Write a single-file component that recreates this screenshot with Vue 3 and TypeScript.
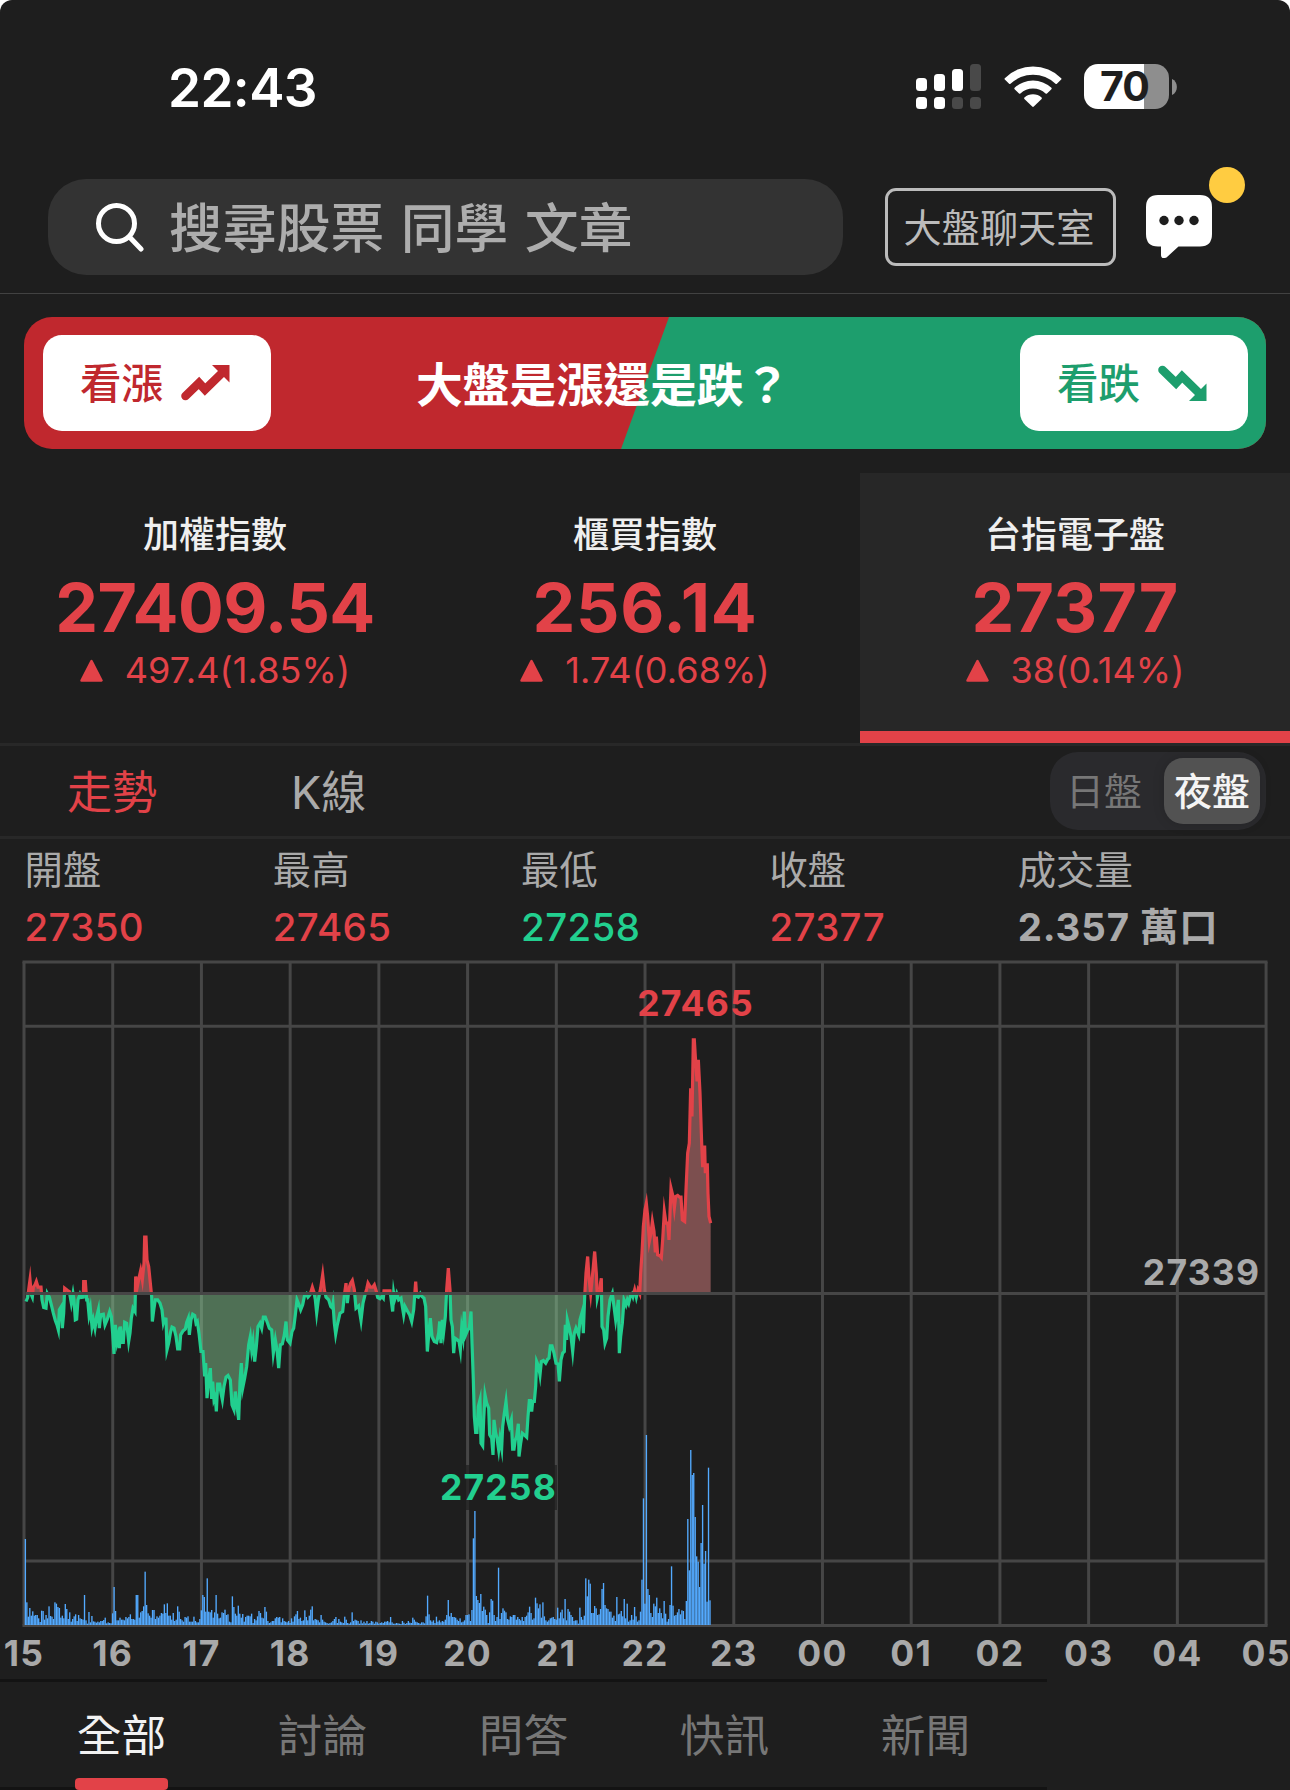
<script setup lang="ts">
interface IndexQuote {
  name: string
  value: string
  change: string
  tracking: number
  active?: boolean
}
interface Stat {
  label: string
  value: string
  tone: 'up' | 'down' | 'flat'
}
type Point = [number, number]

const indices: IndexQuote[] = [
  { name: '加權指數', value: '27409.54', change: '497.4(1.85%)', tracking: -0.6 },
  { name: '櫃買指數', value: '256.14', change: '1.74(0.68%)', tracking: 0.8 },
  { name: '台指電子盤', value: '27377', change: '38(0.14%)', tracking: 0.3, active: true },
]

const stats: Stat[] = [
  { label: '開盤', value: '27350', tone: 'up' },
  { label: '最高', value: '27465', tone: 'up' },
  { label: '最低', value: '27258', tone: 'down' },
  { label: '收盤', value: '27377', tone: 'up' },
  { label: '成交量', value: '2.357 萬口', tone: 'flat' },
]

const feeds = ['全部', '討論', '問答', '快訊', '新聞']

// Chart geometry, in px of the chart's own box
const left = 24
const hourWidth = 88.72
const top = 11
const bottom = 674.5
const baseline = 342.5
const hours = ['15', '16', '17', '18', '19', '20', '21', '22', '23', '00', '01', '02', '03', '04', '05']
const hourX = (i: number): number => left + i * hourWidth
const rows = [75.3, 610]

// Price line: x and y in device thirds, y is 281 at the reference price
const series: string = `
78,305 83,293 86,270 90,240 94,285 97,292 100,262 105,255 109,245 114,262 123,262 126,300 131,323 138,325 142,281 148,292 154,315
160,340 166,362 171,375 175,390 178,330 184,320 187,385 191,340 194,265 203,272 208,275 214,310 219,281 222,300 226,360 230,358
234,300 240,283 244,293 250,292 251,245 256,245 260,300 263,300 267,345 271,325 276,380 280,360 285,385 290,350 295,330 298,385
302,345 310,343 315,375 322,358 329,335 334,350 338,400 342,462 346,375 351,425 354,410 358,445 361,380 366,428 370,428 374,367
380,370 386,425 390,400 394,355 399,325 405,335 407,230 412,260 417,235 422,212 427,240 432,190 434,112 438,112 441,180 446,200
451,250 455,290 457,365 462,325 466,300 473,300 480,310 486,330 490,368 493,357 498,358 501,450 506,430 511,400 516,382 522,385
528,410 533,447 539,447 542,405 549,393 556,388 560,368 565,355 568,405 573,360 578,343 584,347 588,370 592,365 597,400 603,455
609,455 614,530 617,490 621,595 626,540 631,505 635,597 638,545 642,600 646,590 649,635 653,553 659,553 663,580 667,600 672,560
678,532 684,527 691,540 696,615 702,630 706,575 711,620 716,660 720,545 724,490 728,565 734,535 740,500 746,435 751,410 755,450
759,425 764,485 769,440 774,380 780,370 785,385 790,352 796,352 802,368 808,385 815,390 820,460 826,420 831,450 836,505 841,435
847,432 853,405 858,365 862,420 870,430 876,395 881,385 886,345 891,300 897,315 902,330 908,315 914,285 919,281 924,292 930,285
937,262 942,278 946,300 950,340 955,300 962,265 968,225 973,270 978,292 986,300 992,320 997,325 999,312 1003,370 1007,403
1012,375 1020,340 1028,335 1034,280 1038,250 1042,310 1047,265 1052,250 1057,242 1063,270 1068,325 1076,318 1083,362 1089,310
1095,285 1100,268 1104,250 1111,262 1118,262 1123,255 1129,275 1133,293 1140,297 1146,290 1150,295 1152,273 1170,273 1173,295
1178,335 1181,281 1184,300 1190,281 1196,300 1203,295 1211,345 1215,320 1223,335 1229,345 1235,365 1241,330 1247,245 1250,290
1255,292 1261,281 1266,290 1272,295 1277,320 1282,455 1287,395 1291,355 1296,410 1303,425 1310,428 1316,400 1319,365 1323,430
1327,360 1331,395 1336,350 1340,270 1345,205 1350,270 1353,360 1357,380 1361,460 1365,415 1372,420 1377,425 1381,450 1385,385
1389,410 1393,335 1397,405 1403,390 1408,385 1413,335 1416,430 1420,540 1423,650 1427,698 1431,698 1435,620 1440,600 1443,730
1448,738 1451,660 1455,585 1460,610 1466,625 1469,705 1475,715 1479,765 1482,660 1487,700 1491,715 1496,750 1500,715 1505,745
1508,680 1513,640 1518,605 1523,660 1528,680 1534,660 1538,748 1542,748 1546,720 1550,710 1555,672 1557,770 1562,730 1567,700
1573,705 1580,712 1584,650 1588,602 1592,602 1595,635 1598,605 1603,605 1607,560 1610,485 1616,500 1620,525 1624,485 1630,482
1637,490 1643,478 1647,475 1651,438 1656,438 1662,460 1668,490 1674,492 1678,545 1683,480 1688,460 1693,455 1696,375 1700,420
1702,360 1708,385 1713,410 1718,455 1723,400 1728,385 1736,405 1740,360 1747,335 1750,400 1754,290 1758,220 1763,170 1767,235
1772,281 1776,240 1780,200 1784,155 1789,220 1792,295 1798,270 1804,235 1806,380 1811,390 1815,430 1820,415 1824,350 1830,300
1837,281 1842,320 1847,360 1852,325 1855,300 1858,460 1862,410 1867,370 1872,300 1878,315 1882,300 1886,310 1892,285 1896,281
1899,290 1904,270 1909,292 1914,270 1919,281 1922,220 1926,160 1930,80 1935,30 1939,10 1943,50 1948,125 1953,100 1957,65
1962,95 1966,158 1969,110 1973,165 1980,168 1984,173 1988,120 1993,35 1998,70 2003,70 2007,120 2010,40 2013,-35 2019,-10
2023,25 2027,-10 2033,-13 2039,-8 2043,-8 2047,60 2054,65 2058,-30 2063,-140 2068,-170 2072,-335 2076,-250 2080,-480
2083,-480 2086,-430 2091,-355 2095,-420 2100,-320 2105,-170 2108,-98 2110,-158 2114,-158 2116,-80 2118,-105 2122,-105
2124,-20 2127,50 2132,70`

const points: Point[] = series
  .trim()
  .split(/\s+/)
  .map((pair): Point => {
    const [x, y] = pair.split(',').map(Number)
    return [x / 3, (y - 281) / 3 + baseline]
  })

// Split the line into runs that lie above or below the reference price
function splitRuns(all: Point[]): { up: boolean; pts: Point[] }[] {
  const runs: { up: boolean; pts: Point[] }[] = []
  let current = { up: all[0][1] < baseline, pts: [all[0]] }
  for (let i = 1; i < all.length; i++) {
    const a = all[i - 1]
    const b = all[i]
    const up = b[1] === baseline ? current.up : b[1] < baseline
    if (up !== current.up) {
      const t = (baseline - a[1]) / (b[1] - a[1])
      const cross: Point = [a[0] + (b[0] - a[0]) * t, baseline]
      current.pts.push(cross)
      runs.push(current)
      current = { up, pts: [cross] }
    }
    current.pts.push(b)
  }
  runs.push(current)
  return runs
}

const runs = splitRuns(points).map((run) => {
  const line = run.pts.map(([x, y]) => `${x.toFixed(2)},${y.toFixed(2)}`).join(' ')
  const first = run.pts[0][0].toFixed(2)
  const last = run.pts[run.pts.length - 1][0].toFixed(2)
  return { up: run.up, line, area: `${first},${baseline} ${line} ${last},${baseline}` }
})

// One-minute volumes, one row per trading hour
const volumes: number[][] = [
  [258, 68, 25, 51, 28, 41, 28, 30, 30, 20, 9, 43, 42, 16, 30, 20, 56, 27, 25, 18, 68, 64, 54, 51, 22, 28, 20, 63, 48, 18, 38, 10, 18, 26, 32, 12, 30, 20, 18, 16, 90, 14, 4, 39, 8, 27, 11, 10, 7, 10, 8, 12, 12, 15, 22, 5, 8, 6, 5, 35],
  [114, 42, 14, 14, 22, 16, 16, 14, 24, 20, 24, 32, 18, 18, 16, 90, 90, 22, 38, 42, 56, 160, 60, 35, 28, 22, 45, 45, 18, 26, 22, 28, 36, 34, 62, 36, 65, 28, 28, 16, 36, 12, 16, 56, 40, 18, 14, 10, 24, 22, 26, 10, 10, 10, 25, 12, 8, 8, 18, 44],
  [90, 84, 40, 140, 40, 38, 45, 22, 38, 90, 34, 20, 22, 38, 36, 46, 30, 32, 10, 8, 86, 54, 34, 28, 58, 34, 22, 33, 10, 24, 28, 28, 26, 34, 6, 18, 14, 26, 42, 36, 22, 20, 54, 40, 12, 6, 8, 12, 12, 20, 24, 22, 24, 8, 20, 12, 10, 8, 12, 6],
  [20, 10, 26, 32, 42, 18, 22, 12, 14, 44, 24, 14, 28, 46, 56, 14, 18, 16, 14, 8, 30, 16, 10, 8, 6, 4, 6, 8, 12, 18, 24, 6, 18, 10, 8, 6, 25, 16, 6, 4, 8, 38, 12, 16, 14, 12, 4, 14, 5, 10, 5, 12, 4, 6, 12, 10, 4, 10, 8, 4],
  [6, 8, 6, 10, 10, 12, 8, 24, 8, 4, 4, 6, 5, 4, 3, 12, 7, 3, 6, 12, 7, 6, 22, 16, 10, 8, 6, 4, 8, 8, 5, 26, 88, 32, 14, 10, 14, 6, 25, 10, 14, 8, 12, 10, 16, 30, 75, 26, 36, 24, 24, 22, 16, 12, 20, 8, 10, 14, 30, 30],
  [32, 12, 45, 260, 342, 87, 75, 66, 93, 42, 55, 46, 30, 6, 38, 78, 73, 30, 12, 24, 172, 18, 36, 50, 43, 38, 18, 16, 26, 24, 30, 30, 16, 24, 18, 14, 24, 12, 24, 28, 38, 55, 36, 16, 20, 82, 65, 50, 62, 22, 68, 26, 14, 10, 14, 20, 22, 24, 18, 16],
  [52, 20, 38, 46, 20, 78, 14, 48, 40, 30, 24, 12, 14, 14, 4, 52, 24, 16, 28, 140, 86, 136, 124, 36, 36, 57, 50, 30, 32, 48, 108, 126, 60, 50, 48, 40, 40, 22, 28, 12, 84, 32, 34, 42, 26, 78, 20, 64, 10, 14, 30, 16, 54, 26, 10, 14, 40, 136, 380, 64],
  [570, 108, 90, 36, 24, 64, 56, 82, 36, 50, 36, 20, 72, 34, 10, 18, 60, 176, 58, 28, 30, 38, 48, 32, 44, 42, 18, 72, 318, 164, 525, 450, 456, 324, 206, 190, 114, 246, 360, 184, 222, 70, 472, 74],
]

const bars = volumes.flatMap((row, h) =>
  row.map((v, m) => ({ x: 24.7 + (h * 60 + m) * (hourWidth / 60), h: v / 3 })),
)
</script>

<template>
  <div class="screen">
    <div class="status">
      <span class="clock">22:43</span>
      <div class="status-icons">
        <svg class="signal" width="65" height="45" viewBox="0 0 65 45">
          <g fill="#fff">
            <rect x="0" y="14" width="11" height="13" rx="3.5" />
            <rect x="18" y="10" width="11" height="17" rx="3.5" />
            <rect x="36" y="5" width="11" height="22" rx="3.5" />
            <rect x="0" y="33" width="11" height="12" rx="3.5" />
            <rect x="18" y="33" width="11" height="12" rx="3.5" />
          </g>
          <g fill="#494949">
            <rect x="54" y="0" width="11" height="27" rx="3.5" />
            <rect x="36" y="33" width="11" height="12" rx="3.5" />
            <rect x="54" y="33" width="11" height="12" rx="3.5" />
          </g>
        </svg>
        <svg class="wifi" width="58" height="43" viewBox="0 0 58 43">
          <g fill="#fff">
            <path d="M0.8 13.2 A40 40 0 0 1 57.2 13.2 Q57.8 13.9 57.2 14.6 L52.9 18.8 Q52.2 19.4 51.5 18.8 A32.4 32.4 0 0 0 6.5 18.8 Q5.8 19.4 5.1 18.8 L0.8 14.6 Q0.2 13.9 0.8 13.2 Z" />
            <path d="M10.6 22.8 A27 27 0 0 1 47.4 22.8 Q48 23.5 47.4 24.2 L43 28.4 Q42.3 29 41.6 28.4 A19 19 0 0 0 16.4 28.4 Q15.7 29 15 28.4 L10.6 24.2 Q10 23.5 10.6 22.8 Z" />
            <path d="M20.4 32.4 A13 13 0 0 1 37.6 32.4 Q38.3 33.2 37.6 33.9 L29.8 41.6 Q29 42.3 28.2 41.6 L20.4 33.9 Q19.7 33.2 20.4 32.4 Z" />
          </g>
        </svg>
        <div class="battery"><span>70</span></div>
        <svg class="nub" width="5" height="16" viewBox="0 0 5 16"><path d="M0 0 C6.5 2.5 6.5 13.5 0 16 Z" fill="#8e8e8e" /></svg>
      </div>
    </div>

    <header class="header">
      <div class="search">
        <svg width="50" height="50" viewBox="0 0 50 50" fill="none" stroke="#fff" stroke-width="5" stroke-linecap="round">
          <circle cx="21.5" cy="21.5" r="18" />
          <path d="M34.5 35 L46 47" />
        </svg>
        <span>搜尋股票 同學 文章</span>
      </div>
      <button class="room">大盤聊天室</button>
      <div class="messages">
        <svg width="66" height="64" viewBox="0 0 66 64">
          <path d="M12 0 H54 Q66 0 66 12 V39 Q66 51.5 54 51.5 H32.5 L20.5 62.5 Q15 64.5 15 60 V51.5 H12 Q0 51.5 0 39 V12 Q0 0 12 0 Z" fill="#fff" />
          <circle v-for="cx in [18, 33, 48]" :key="cx" :cx="cx" cy="25.5" r="4.7" fill="#1e1e1e" />
        </svg>
        <i class="badge" />
      </div>
    </header>

    <section class="poll">
      <svg class="poll-bg" width="1242" height="132" viewBox="0 0 1242 132">
        <rect width="1242" height="132" fill="#c0282e" />
        <path d="M645 0 H1242 V132 H597 Z" fill="#1d9e6d" />
      </svg>
      <button class="vote vote-up">
        <span>看漲</span>
        <svg width="49" height="36" viewBox="0 0 49 36">
          <path d="M4.5 31 L18 18 L24 24.5 L41 8" fill="none" stroke="currentColor" stroke-width="8.6" stroke-linecap="round" />
          <path d="M31 0 H48.5 V17.5 Z" fill="currentColor" />
        </svg>
      </button>
      <h1>大盤是漲還是跌？</h1>
      <button class="vote vote-down">
        <span>看跌</span>
        <svg width="49" height="36" viewBox="0 0 49 36">
          <path d="M4.5 5 L18 18 L24 11.5 L41 28" fill="none" stroke="currentColor" stroke-width="8.6" stroke-linecap="round" />
          <path d="M31 36 H48.5 V18.5 Z" fill="currentColor" />
        </svg>
      </button>
    </section>

    <section class="indices">
      <div v-for="q in indices" :key="q.name" class="index" :class="{ active: q.active }">
        <div class="index-name">{{ q.name }}</div>
        <div class="index-value" :style="{ letterSpacing: q.tracking + 'px' }">{{ q.value }}</div>
        <div class="index-change">
          <svg width="23" height="23" viewBox="0 0 23 23"><path d="M11.5 2 L21.5 21.5 H1.5 Z" fill="#e24248" stroke="#e24248" stroke-width="2.5" stroke-linejoin="round" /></svg>
          <span>{{ q.change }}</span>
        </div>
      </div>
    </section>

    <section class="modes">
      <span class="mode on">走勢</span>
      <span class="mode">K線</span>
      <div class="segment">
        <span>日盤</span>
        <span class="chosen">夜盤</span>
      </div>
    </section>

    <section class="stats">
      <div v-for="s in stats" :key="s.label" class="stat">
        <div class="stat-label">{{ s.label }}</div>
        <div class="stat-value" :class="s.tone">{{ s.value }}</div>
      </div>
    </section>

    <svg class="chart" width="1290" height="728" viewBox="0 0 1290 728">
      <g stroke="#464646" stroke-width="3">
        <line v-for="(h, i) in hours" :key="h" :x1="hourX(i)" :x2="hourX(i)" :y1="top" :y2="bottom" />
        <line v-for="y in rows" :key="y" :x1="left" :x2="1266" :y1="y" :y2="y" />
        <path :d="`M22.5 ${top} H1267.5 M22.5 ${bottom} H1267.5`" />
      </g>
      <rect x="441" y="514" width="116" height="45" fill="#1e1e1e" fill-opacity=".7" />
      <g fill="#53aaff">
        <rect v-for="(b, i) in bars" :key="i" :x="b.x" :y="bottom - 0.5 - b.h" width="1.35" :height="b.h" />
      </g>
      <polygon v-for="(r, i) in runs" :key="'a' + i" :points="r.area" :class="r.up ? 'area-up' : 'area-down'" />
      <polyline v-for="(r, i) in runs" :key="'l' + i" :points="r.line" :class="r.up ? 'line-up' : 'line-down'" />
      <line :x1="25.5" :x2="1266" :y1="baseline" :y2="baseline" stroke="#464646" stroke-width="3" />
      <g class="chart-label">
        <text x="695.5" y="65.3" text-anchor="middle" fill="#e24248">27465</text>
        <text x="498.5" y="549.3" text-anchor="middle" fill="#22cf8f">27258</text>
        <text x="1201.5" y="334.3" text-anchor="middle">27339</text>
        <text v-for="(h, i) in hours" :key="'t' + h" :x="hourX(i)" y="714.8" text-anchor="middle">{{ h }}</text>
      </g>
    </svg>

    <nav class="feeds">
      <span v-for="(f, i) in feeds" :key="f" class="feed" :class="{ current: i === 0 }">{{ f }}</span>
    </nav>
  </div>
</template>

<style>
body {
  background: #fff;
}
</style>

<style scoped>
.screen {
  display: flex;
  flex-direction: column;
  width: 1290px;
  height: 1790px;
  overflow: hidden;
  background: #1e1e1e;
  border-radius: 12px 12px 0 0;
  color: #aaa;
  font-family: Inter, "Noto Sans CJK TC", sans-serif;
  box-sizing: border-box;
}
.screen *,
.screen *::before,
.screen *::after {
  box-sizing: border-box;
}
button {
  font-family: inherit;
  margin: 0;
  padding: 0;
  border: 0;
}
.status {
  display: flex;
  flex: none;
  height: 173px;
  padding: 0 113px 0 168px;
  justify-content: space-between;
  align-items: center;
}
.clock {
  padding-top: 2px;
  color: #fff;
  font-size: 53px;
  font-weight: 600;
  line-height: 60px;
  letter-spacing: -0.6px;
  white-space: nowrap;
}
.status-icons {
  display: flex;
  align-items: center;
}
.wifi {
  margin-left: 23px;
}
.battery {
  width: 85px;
  height: 45px;
  margin-left: 22px;
  padding-right: 4px;
  border-radius: 14px;
  background: linear-gradient(90deg, #fff 60px, #8e8e8e 60px);
  color: #1e1e1e;
  font-size: 41px;
  font-weight: 700;
  line-height: 45px;
  text-align: center;
  letter-spacing: -1px;
}
.nub {
  margin-left: 3px;
}
.header {
  display: flex;
  flex: none;
  height: 121px;
  padding: 6px 78px 0 48px;
  align-items: flex-start;
  border-bottom: 1px solid #424242;
}
.search {
  display: flex;
  width: 795px;
  height: 96px;
  padding-left: 47px;
  align-items: center;
  border-radius: 38px;
  background: #333;
  color: #adadad;
  font-size: 53.8px;
  font-weight: 500;
  line-height: 80px;
  word-spacing: 2.2px;
  white-space: nowrap;
}
.search svg {
  flex: none;
  margin-right: 24px;
}
.search span {
  padding-top: 3px;
}
.room {
  width: 231px;
  height: 78px;
  margin: 9px 0 0 42px;
  padding: 2px 3px 0 0;
  border: 3px solid #bbb;
  border-radius: 11px;
  background: none;
  color: #bbb;
  font-size: 38.2px;
  line-height: 70px;
  white-space: nowrap;
}
.messages {
  position: relative;
  width: 66px;
  height: 64px;
  margin: 16px 0 0 30px;
}
.messages svg {
  display: block;
}
.badge {
  position: absolute;
  top: -28px;
  left: 63px;
  width: 36px;
  height: 36px;
  border-radius: 50%;
  background: #ffcc41;
}
.poll {
  position: relative;
  display: flex;
  flex: none;
  height: 132px;
  margin: 23px 24px 24px;
  padding: 18px 18px 18px 19px;
  border-radius: 28px;
  overflow: hidden;
}
.poll-bg {
  position: absolute;
  inset: 0;
}
.poll h1 {
  position: relative;
  flex: 1;
  margin: 0;
  padding: 2px 0 0 145px;
  color: #fff;
  font-size: 46.8px;
  font-weight: 700;
  line-height: 96px;
  white-space: nowrap;
}
.vote {
  position: relative;
  display: flex;
  width: 228px;
  height: 96px;
  padding: 0 0 0 37px;
  align-items: center;
  border-radius: 19px;
  background: #fff;
  font-size: 41.5px;
  font-weight: 500;
  line-height: 60px;
}
.vote span {
  padding-top: 1px;
}
.vote svg {
  margin-left: 18px;
}
.vote-up {
  color: #c0282e;
}
.vote-down {
  color: #1d9e6d;
}
.indices {
  display: flex;
  flex: none;
  height: 273px;
  border-bottom: 3px solid #282828;
}
.index {
  width: 430px;
  padding-top: 36px;
  text-align: center;
  white-space: nowrap;
}
.index.active {
  border-bottom: 12px solid #e24248;
  background: #272727;
}
.index-name {
  height: 52px;
  color: #efefef;
  font-size: 36px;
  font-weight: 500;
  line-height: 52px;
}
.index-value {
  height: 82px;
  color: #e24248;
  font-size: 68px;
  font-weight: 700;
  line-height: 92px;
}
.index-change {
  display: flex;
  height: 50px;
  margin-top: 2px;
  align-items: center;
  justify-content: center;
  color: #e24248;
  font-size: 36px;
  letter-spacing: 0.1px;
}
.index-change svg {
  margin-right: 22px;
}
.modes {
  display: flex;
  flex: none;
  height: 93px;
  padding: 6px 24px 6px 67px;
  border-bottom: 3px solid #282828;
  font-size: 45px;
  font-weight: 400;
  line-height: 82px;
}
.mode {
  width: 224px;
  white-space: nowrap;
}
.mode.on {
  color: #e24248;
}
.segment {
  display: flex;
  width: 216px;
  height: 78px;
  margin-left: auto;
  padding: 6px;
  border-radius: 28px;
  background: #2a2a2d;
  color: #777;
  font-size: 38px;
  line-height: 67px;
  text-align: center;
}
.segment span {
  width: 108px;
  padding-right: 12px;
}
.segment .chosen {
  width: 96px;
  padding: 0;
  border-radius: 19px;
  background: #525252;
  box-shadow: 0 0 12px rgba(0, 0, 0, 0.15);
  color: #f4f4f4;
  font-weight: 500;
}
.stats {
  display: flex;
  flex: none;
  height: 112px;
  padding-left: 24.5px;
  font-size: 38.4px;
  white-space: nowrap;
}
.stat {
  width: 248.3px;
}
.stat-label {
  height: 60px;
  font-weight: 400;
  line-height: 62px;
}
.stat-value {
  font-weight: 500;
  line-height: 56px;
  letter-spacing: 0.4px;
}
.stat-value.up {
  color: #e24248;
}
.stat-value.down {
  color: #22cf8f;
}
.stat-value.flat {
  font-weight: 650;
  letter-spacing: 0.9px;
}
.chart {
  display: block;
  flex: none;
}
.chart-label {
  fill: #a9a9a9;
  font-size: 35.5px;
  font-weight: 650;
  letter-spacing: 1.2px;
}
.area-up {
  fill: rgba(239, 139, 139, 0.45);
}
.area-down {
  fill: rgba(139, 212, 154, 0.45);
}
.line-up,
.line-down {
  fill: none;
  stroke-width: 3.2;
  stroke-miterlimit: 10;
}
.line-up {
  stroke: #e24248;
}
.line-down {
  stroke: #22cf8f;
}
.feeds {
  display: flex;
  flex: none;
  width: 1047px;
  height: 111px;
  padding-left: 21px;
  border-top: 3px solid #131313;
  border-bottom: 3px solid #131313;
  color: #777;
  font-size: 44.7px;
  font-weight: 400;
  line-height: 108px;
  text-align: center;
}
.feed {
  position: relative;
  width: 201px;
  height: 105px;
}
.feed.current {
  color: #f2f2f2;
}
.feed.current::after {
  content: "";
  position: absolute;
  left: 54px;
  bottom: -3px;
  width: 93px;
  height: 12px;
  border-radius: 4px;
  background: #e24248;
}
</style>
